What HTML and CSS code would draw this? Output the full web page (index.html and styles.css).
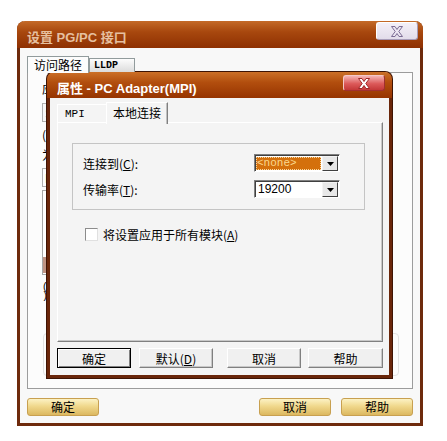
FILE: index.html
```html
<!DOCTYPE html>
<html lang="zh-CN">
<head>
    <meta charset="UTF-8">
    <title>设置 PG/PC 接口</title>
    <link rel="stylesheet" href="styles.css">
</head>
<body>
    <div class="win">
        <div class="win-title">
            <span class="win-caption">设置 PG/PC 接口</span>
            <span class="close close-idle">
                <svg width="14" height="11" viewBox="0 0 14 11"><polygon points="1.5,0.5 5,0.5 7,3.5 9,0.5 12.5,0.5 8.8,5.5 12.5,10.5 9,10.5 7,7.5 5,10.5 1.5,10.5 5.2,5.5" fill="#ece6f2" stroke="#7c6c94" stroke-width="1"/></svg>
            </span>
        </div>
        <div class="win-body">
            <div class="tabs outer-tabs">
                <div class="tab active">访问路径</div>
                <div class="tab tab-lldp">LLDP</div>
            </div>
            <div class="panel outer-panel">
                <p class="line">应用程序访问点(<u>A</u>):</p>
                <div class="field field-gray">S7ONLINE (STEP 7) --&gt; PC Adapter(MPI)</div>
                <p class="line">(用于 STEP 7 的标准设置)</p>
                <p class="line">为使用的接口分配参数(<u>P</u>):</p>
                <div class="field">PC Adapter(MPI)</div>
                <div class="listbox">
                    <div class="list-item"><i class="ico"></i>ISO Ind. Ethernet -&gt; Realtek</div>
                    <div class="list-item"><i class="ico"></i>PC Adapter(Auto)</div>
                    <div class="list-item"><i class="ico"></i>PC Adapter(MPI)</div>
                    <div class="list-item"><i class="ico"></i>PC Adapter(PROFIBUS)</div>
                    <div class="list-item selected"><i class="ico"></i>PC Adapter(MPI)</div>
                </div>
                <p class="note">(为 MPI 网络分配 PC Adapter 参数<br>)</p>
                <div class="ghost-group"></div>
            </div>
            <div class="win-actions">
                <button class="gold">确定</button>
                <span class="spacer"></span>
                <button class="gold">取消</button>
                <button class="gold">帮助</button>
            </div>
        </div>

        <div class="dialog">
            <div class="dialog-title">
                <span class="dialog-caption">属性 - PC Adapter(MPI)</span>
                <span class="close close-red">
                    <svg width="14" height="11" viewBox="0 0 14 11"><polygon points="1.5,0.5 5,0.5 7,3.5 9,0.5 12.5,0.5 8.8,5.5 12.5,10.5 9,10.5 7,7.5 5,10.5 1.5,10.5 5.2,5.5" fill="#ffffff" stroke="#a02828" stroke-width="1"/></svg>
                </span>
            </div>
            <div class="dialog-body">
                <div class="tabs inner-tabs">
                    <div class="tab tab-mpi">MPI</div>
                    <div class="tab active">本地连接</div>
                </div>
                <div class="panel inner-panel">
                    <div class="group">
                        <div class="row">
                            <label class="row-label">连接到(<u>C</u>):</label>
                            <div class="combo">
                                <span class="combo-value selected-value">&lt;none&gt;</span>
                                <span class="combo-btn"><svg width="7" height="4" viewBox="0 0 7 4"><polygon points="0,0 7,0 3.5,4" fill="#000"/></svg></span>
                            </div>
                        </div>
                        <div class="row">
                            <label class="row-label">传输率(<u>T</u>):</label>
                            <div class="combo">
                                <span class="combo-value">19200</span>
                                <span class="combo-btn"><svg width="7" height="4" viewBox="0 0 7 4"><polygon points="0,0 7,0 3.5,4" fill="#000"/></svg></span>
                            </div>
                        </div>
                    </div>
                    <label class="check">
                        <span class="check-box"></span>
                        <span>将设置应用于所有模块(<u>A</u>)</span>
                    </label>
                </div>
                <div class="dialog-actions">
                    <button class="plain default">确定</button>
                    <button class="plain btn-def">默认(<u>D</u>)</button>
                    <button class="plain btn-cancel">取消</button>
                    <button class="plain btn-help">帮助</button>
                </div>
            </div>
        </div>
    </div>
</body>
</html>
```

FILE: styles.css
```css
body {
    margin: 0;
    background-color: #fff;
    font-family: "Noto Sans CJK SC", "Liberation Sans", sans-serif;
    font-size: 12px;
    color: #000;
}

p {
    margin: 0;
}

/* outer window */
.win {
    position: relative;
    width: 406px;
    height: 405px;
    margin: 21px 0 0 17px;
    box-sizing: border-box;
    border: 3px solid #6e2a0c;
    border-top: 0;
    border-radius: 8px 8px 0 0;
    background-color: #f8f8f8;
}

.win-title {
    height: 27px;
    margin: 0 -3px;
    padding: 0 5px 0 10px;
    display: flex;
    align-items: flex-start;
    border-radius: 8px 8px 0 0;
    background: linear-gradient(#c46a28, #a8480e 40%, #8e3002);
}

.win-caption {
    margin-top: 6px;
    flex: 1;
    font-family: "Liberation Sans", "Noto Sans CJK SC", sans-serif;
    font-weight: bold;
    font-size: 13px;
    color: #e6c0a0;
}

.close {
    width: 42px;
    height: 18px;
    box-sizing: border-box;
    display: flex;
    align-items: center;
    justify-content: center;
    border-radius: 3px;
}

.close-idle {
    margin-top: 1px;
    background: linear-gradient(#f4f0f8, #e2dcea);
    border: 1px solid #fff;
    border-right-color: #a89cb8;
    border-bottom-color: #a89cb8;
}

.win-body {
    padding: 8px 7px 7px 7px;
}

/* tabs */
.tabs {
    display: flex;
    align-items: flex-end;
    position: relative;
    z-index: 1;
}

.tab {
    box-sizing: border-box;
    border: 1px solid #919b9c;
    border-bottom: 0;
    padding: 0 4px;
    white-space: nowrap;
    overflow: hidden;
}

.outer-tabs {
    height: 16px;
}

.outer-tabs .tab.active {
    width: 62px;
    height: 17px;
    margin-bottom: -1px;
    padding-left: 6px;
    line-height: 15px;
    background-color: #fcfcfc;
    font-size: 12px;
}

.tab-lldp {
    width: 46px;
    height: 14px;
    line-height: 14px;
    background: linear-gradient(#fcfcfc, #dcdcdc);
    font-family: "Liberation Mono", monospace;
    font-size: 10px;
    font-weight: bold;
}

.panel {
    box-sizing: border-box;
}

.outer-panel {
    height: 317px;
    padding: 9px 14px;
    border: 1px solid #9c9c9c;
    background-color: #fcfcfc;
    overflow: hidden;
}

.line {
    line-height: 14px;
    white-space: nowrap;
    margin-top: 6px;
}

.outer-panel .line:first-child {
    margin-top: 0;
}

.field {
    margin-top: 6px;
    width: 320px;
    height: 19px;
    box-sizing: border-box;
    border: 1px solid #b0b0b0;
    padding-left: 2px;
    line-height: 17px;
    white-space: nowrap;
    overflow: hidden;
    background-color: #fff;
}

.field-gray {
    margin-top: 7px;
    color: #a8a8a8;
    background-color: #f8f8f8;
}

.listbox {
    margin-top: 3px;
    width: 320px;
    height: 85px;
    box-sizing: border-box;
    border: 1px solid #a8a8a8;
    padding-top: 2px;
    background-color: #fff;
    overflow: hidden;
}

.list-item {
    height: 16px;
    display: flex;
    align-items: center;
    gap: 4px;
    padding-left: 3px;
    white-space: nowrap;
}

.list-item.selected {
    background-color: #c09484;
    color: #fff;
}

.ico {
    width: 12px;
    height: 11px;
    background-color: #707070;
}

.note {
    margin-top: 8px;
    font-family: "Liberation Mono", monospace;
    font-size: 10px;
    line-height: 9px;
    white-space: nowrap;
}

.ghost-group {
    margin-top: 32px;
    width: 356px;
    height: 43px;
    margin-left: 1px;
    box-sizing: border-box;
    border: 1px solid #e2e2e2;
    border-radius: 4px;
}

.win-actions {
    margin-top: 9px;
    display: flex;
    gap: 10px;
}

.spacer {
    flex: 1;
}

button {
    font-family: "Noto Sans CJK SC", sans-serif;
    font-size: 12px;
    color: #000;
    padding: 0;
}

.gold {
    width: 72px;
    height: 18px;
    line-height: 16px;
    border: 1px solid #c8a050;
    border-radius: 3px;
    background: linear-gradient(#fcf2c4, #f0d88c 45%, #dcb860);
}

/* inner dialog */
.dialog {
    position: absolute;
    left: 27px;
    top: 51px;
    width: 345px;
    height: 306px;
    box-sizing: border-box;
    border: 3px solid #6a260a;
    border-top: 0;
    border-radius: 7px 7px 0 0;
    background-color: #f4f4f4;
    box-shadow: 0 0 0 1px #3e1404;
}

.dialog-title {
    height: 26px;
    margin: 0 -3px;
    padding: 3px 7px 0 10px;
    box-sizing: border-box;
    display: flex;
    align-items: flex-start;
    border-radius: 7px 7px 0 0;
    background: linear-gradient(#cc7028, #b24e0e 40%, #963400);
}

.dialog-caption {
    flex: 1;
    margin-top: 3px;
    font-family: "Liberation Sans", "Noto Sans CJK SC", sans-serif;
    font-weight: bold;
    font-size: 13px;
    color: #fff;
}

.close-red {
    height: 16px;
    border: 1px solid #f4c8c8;
    border-right-color: #a03030;
    border-bottom-color: #a03030;
    background: linear-gradient(#f4b4b4, #dc5a5a 55%, #c43838);
}

.dialog-body {
    padding: 4px 6px 0 7px;
}

.inner-tabs {
    height: 20px;
}

.tab-mpi {
    width: 49px;
    height: 18px;
    padding-left: 7px;
    line-height: 18px;
    border-color: #fff;
    border-right: 0;
    background-color: #f4f4f4;
    font-family: "Liberation Mono", monospace;
    font-size: 11px;
}

.inner-tabs .tab.active {
    width: 62px;
    height: 22px;
    margin-bottom: -2px;
    line-height: 20px;
    padding-left: 6px;
    border-color: #fff;
    border-right: 1px solid #808080;
    box-shadow: inset -1px 0 0 #c0c0c0;
    background-color: #f4f4f4;
    font-size: 12px;
}

.inner-panel {
    height: 220px;
    padding: 20px 0 0 14px;
    border: 1px solid #fff;
    border-right-color: #808080;
    border-bottom-color: #808080;
    box-shadow: inset -1px -1px 0 #c8c8c8;
}

.group {
    width: 293px;
    height: 67px;
    box-sizing: border-box;
    padding: 10px 10px 0 10px;
    border: 1px solid #c4c4c4;
    display: flex;
    flex-direction: column;
    gap: 8px;
}

.row {
    display: flex;
    height: 18px;
    align-items: center;
}

.row-label {
    width: 171px;
    font-size: 12px;
}

.combo {
    width: 86px;
    height: 18px;
    box-sizing: border-box;
    border: 1px solid;
    border-color: #808080 #fff #fff #808080;
    box-shadow: inset 1px 1px 0 #404040;
    padding: 1px 1px 0 1px;
    display: flex;
    background-color: #fff;
}

.combo-value {
    flex: 1;
    padding-left: 2px;
    line-height: 15px;
    font-family: "Liberation Sans", sans-serif;
    font-size: 12px;
}

.selected-value {
    margin: 1px 1px 1px 0;
    padding-left: 1px;
    background-color: #d4700c;
    color: #fad88e;
    outline: 1px dotted #f8d8a0;
    outline-offset: -1px;
    font-family: "Liberation Mono", monospace;
    font-size: 11px;
    line-height: 13px;
}

.combo-btn {
    width: 16px;
    height: 15px;
    box-sizing: border-box;
    border: 1px solid;
    border-color: #f4f4f4 #404040 #404040 #f4f4f4;
    background-color: #e8e8e8;
    display: flex;
    align-items: center;
    justify-content: center;
}

.check {
    margin: 16px 0 0 13px;
    display: flex;
    align-items: center;
    gap: 5px;
    font-size: 12px;
}

.check-box {
    width: 13px;
    height: 13px;
    box-sizing: border-box;
    border: 1px solid;
    border-color: #8c8c8c #e0e0e0 #e0e0e0 #8c8c8c;
    background-color: #fff;
}

.dialog-actions {
    margin-top: 6px;
    display: flex;
    gap: 8px;
}

.plain {
    width: 74px;
    height: 20px;
    box-sizing: border-box;
    border: 1px solid;
    border-color: #fff #808080 #808080 #fff;
    box-shadow: inset -1px -1px 0 #c8c8c8;
    background-color: #f0f0f0;
    line-height: 17px;
}

.plain.default {
    border: 1px solid #000;
    box-shadow: inset 1px 1px 0 #fff, inset -1px -1px 0 #808080;
}

.btn-cancel {
    margin-left: 6px;
}

.btn-help {
    width: 75px;
    margin-left: -1px;
}
```
